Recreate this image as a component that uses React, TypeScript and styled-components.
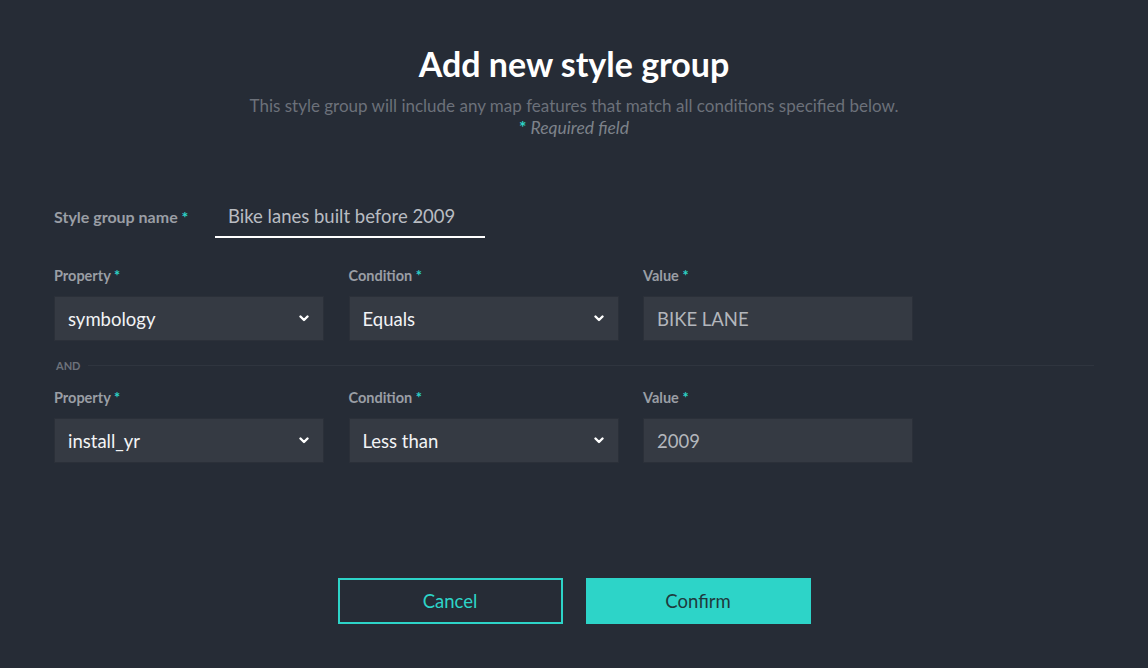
import React from "react";
import styled, { createGlobalStyle } from "styled-components";

const GlobalStyle = createGlobalStyle`
  html, body {
    margin: 0;
    padding: 0;
    background: #262c36;
  }
  body {
    font-family: Lato, "Noto Sans", sans-serif;
  }
  * { box-sizing: border-box; }
`;

const Page = styled.div`
  width: 1148px;
  height: 668px;
  background: #262c36;
  padding: 42px 54px 0 54px;
  display: flex;
  flex-direction: column;
`;

const Header = styled.header`
  display: flex;
  flex-direction: column;
  align-items: center;
`;

const Title = styled.h1`
  margin: 0;
  font-size: 34px;
  font-weight: 700;
  color: #ffffff;
  line-height: 44px;
`;

const Subtitle = styled.p`
  margin: 9px 0 0 0;
  font-size: 17px;
  color: #6c717a;
  line-height: 22px;
`;

const Required = styled.p`
  margin: 0;
  font-size: 17.5px;
  font-style: italic;
  color: #7d828a;
  line-height: 22px;
`;

const Star = styled.span`
  color: #2dd4c8;
  font-style: normal;
  font-weight: 700;
`;

const NameRow = styled.div`
  display: flex;
  align-items: flex-end;
  margin-top: 65px;
`;

const NameLabel = styled.label`
  width: 161px;
  font-size: 16px;
  font-weight: 700;
  color: #9a9ea5;
  padding-bottom: 12px;
`;

const NameInput = styled.div`
  width: 270px;
  border-bottom: 2px solid #ffffff;
  padding: 0 0 8px 13px;
  font-size: 18.5px;
  color: #b9bcc2;
  line-height: 24px;
`;

const Grid = styled.div`
  display: grid;
  grid-template-columns: repeat(3, 270px);
  column-gap: 24.5px;
`;

const FirstRow = styled.div`
  margin-top: 28px;
`;

const Field = styled.div`
  display: flex;
  flex-direction: column;
`;

const FieldLabel = styled.label`
  font-size: 14.5px;
  font-weight: 700;
  color: #9a9ea5;
  line-height: 20px;
  margin-bottom: 10px;
`;

const Box = styled.div<{ $muted?: boolean }>`
  height: 45px;
  background: #353a43;
  border: 1px solid #2b3039;
  display: flex;
  align-items: center;
  justify-content: space-between;
  padding: 0 14px 0 13px;
  font-size: 18.5px;
  color: ${(p) => (p.$muted ? "#b3b6bc" : "#f2f3f5")};
`;

const Separator = styled.div`
  display: flex;
  align-items: center;
  gap: 8px;
  margin: 18px 0 16px 0;
`;

const AndText = styled.span`
  font-size: 11px;
  font-weight: 700;
  color: #6d727b;
  padding-left: 2px;
`;

const Line = styled.div`
  flex: 1;
  height: 1px;
  background: #2f353f;
`;

const Actions = styled.div`
  display: flex;
  justify-content: center;
  gap: 23px;
  margin-top: 115px;
`;

const Button = styled.button<{ $primary?: boolean }>`
  width: 225px;
  height: 46px;
  font-family: inherit;
  font-size: 18.5px;
  cursor: pointer;
  border: 2px solid #2dd4c8;
  background: ${(p) => (p.$primary ? "#2dd4c8" : "transparent")};
  color: ${(p) => (p.$primary ? "#1f3a3d" : "#2dd4c8")};
`;

const Chevron = () => (
  <svg width="10" height="7" viewBox="0 0 10 7">
    <path d="M1.5 1.5 L5 5 L8.5 1.5" fill="none" stroke="#ffffff" strokeWidth="2.4" strokeLinecap="round" strokeLinejoin="round" />
  </svg>
);

type Row = { property: string; condition: string; value: string };

const rows: Row[] = [
  { property: "symbology", condition: "Equals", value: "BIKE LANE" },
  { property: "install_yr", condition: "Less than", value: "2009" },
];

const ConditionRow = ({ row }: { row: Row }) => (
  <Grid>
    <Field>
      <FieldLabel>
        Property <Star>*</Star>
      </FieldLabel>
      <Box>
        {row.property}
        <Chevron />
      </Box>
    </Field>
    <Field>
      <FieldLabel>
        Condition <Star>*</Star>
      </FieldLabel>
      <Box>
        {row.condition}
        <Chevron />
      </Box>
    </Field>
    <Field>
      <FieldLabel>
        Value <Star>*</Star>
      </FieldLabel>
      <Box $muted>{row.value}</Box>
    </Field>
  </Grid>
);

export default function App() {
  return (
    <>
      <GlobalStyle />
      <Page>
        <Header>
          <Title>Add new style group</Title>
          <Subtitle>This style group will include any map features that match all conditions specified below.</Subtitle>
          <Required>
            <Star>*</Star> Required field
          </Required>
        </Header>
        <NameRow>
          <NameLabel>
            Style group name <Star>*</Star>
          </NameLabel>
          <NameInput>Bike lanes built before 2009</NameInput>
        </NameRow>
        <FirstRow>
          <ConditionRow row={rows[0]} />
        </FirstRow>
        <Separator>
          <AndText>AND</AndText>
          <Line />
        </Separator>
        <ConditionRow row={rows[1]} />
        <Actions>
          <Button>Cancel</Button>
          <Button $primary>Confirm</Button>
        </Actions>
      </Page>
    </>
  );
}
